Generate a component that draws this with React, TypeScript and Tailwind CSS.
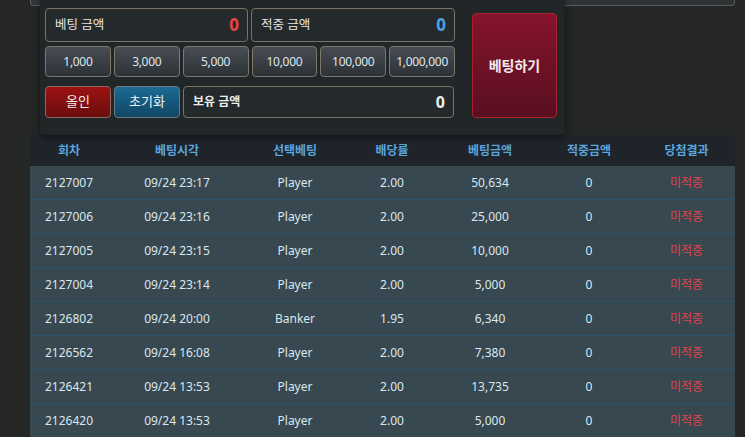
import React from "react";

type Row = {
  round: string;
  time: string;
  pick: string;
  odds: string;
  amount: string;
  win: string;
  result: string;
};

const rows: Row[] = [
  { round: "2127007", time: "09/24 23:17", pick: "Player", odds: "2.00", amount: "50,634", win: "0", result: "미적중" },
  { round: "2127006", time: "09/24 23:16", pick: "Player", odds: "2.00", amount: "25,000", win: "0", result: "미적중" },
  { round: "2127005", time: "09/24 23:15", pick: "Player", odds: "2.00", amount: "10,000", win: "0", result: "미적중" },
  { round: "2127004", time: "09/24 23:14", pick: "Player", odds: "2.00", amount: "5,000", win: "0", result: "미적중" },
  { round: "2126802", time: "09/24 20:00", pick: "Banker", odds: "1.95", amount: "6,340", win: "0", result: "미적중" },
  { round: "2126562", time: "09/24 16:08", pick: "Player", odds: "2.00", amount: "7,380", win: "0", result: "미적중" },
  { round: "2126421", time: "09/24 13:53", pick: "Player", odds: "2.00", amount: "13,735", win: "0", result: "미적중" },
  { round: "2126420", time: "09/24 13:53", pick: "Player", odds: "2.00", amount: "5,000", win: "0", result: "미적중" },
];

const chips = ["1,000", "3,000", "5,000", "10,000", "100,000", "1,000,000"];

const headers = ["회차", "베팅시각", "선택베팅", "배당률", "베팅금액", "적중금액", "당첨결과"];

const cols = "grid grid-cols-[78px_138px_98px_96px_100px_98px_97px]";

const BetPanel: React.FC = () => {
  return (
    <div className="relative z-10 -mt-[6px] ml-[10px] w-[525px] h-[135px] rounded-b-[5px] bg-[#212628] shadow-[0_2px_6px_rgba(0,0,0,0.5)] flex pl-[5px] pt-[8px]">
      <div className="w-[410px] flex flex-col">
        {/* Amount boxes */}
        <div className="flex gap-[3px]">
          <div className="w-[203px] h-[34px] rounded-[4px] border border-[#7a7367] bg-[#24292b] flex items-center justify-between pl-[9px] pr-[8px]">
            <span className="text-[12.5px] text-[#e4e6e6]">베팅 금액</span>
            <span className="text-[17px] font-bold text-[#e5443f]">0</span>
          </div>
          <div className="w-[204px] h-[34px] rounded-[4px] border border-[#7a7367] bg-[#24292b] flex items-center justify-between pl-[9px] pr-[8px]">
            <span className="text-[12.5px] text-[#e4e6e6]">적중 금액</span>
            <span className="text-[17px] font-bold text-[#4aa2e6]">0</span>
          </div>
        </div>

        {/* Chip buttons */}
        <div className="mt-[4px] grid grid-cols-6 gap-[3px] w-[410px]">
          {chips.map((c) => (
            <button
              key={c}
              className="h-[31px] rounded-[4px] border border-[#7d776b] bg-gradient-to-b from-[#474d53] to-[#2c3236] text-[12px] text-[#dfe6ec] tracking-[-0.3px]"
            >
              {c}
            </button>
          ))}
        </div>

        {/* All-in / reset / balance */}
        <div className="mt-[9px] flex gap-[3px]">
          <button className="w-[66px] h-[32px] rounded-[4px] border border-[#8a6a60] bg-gradient-to-b from-[#9c1212] to-[#6a0d0d] text-[13px] text-[#f2eeee]">
            올인
          </button>
          <button className="w-[66px] h-[32px] rounded-[4px] border border-[#6c7a80] bg-gradient-to-b from-[#1b6b92] to-[#114666] text-[13px] text-[#eef3f6]">
            초기화
          </button>
          <div className="w-[271px] h-[32px] rounded-[4px] border border-[#7a7367] bg-[#24292b] flex items-center justify-between pl-[9px] pr-[8px]">
            <span className="text-[12px] font-bold text-[#eceeee]">보유 금액</span>
            <span className="text-[16px] font-bold text-[#eceeee]">0</span>
          </div>
        </div>
      </div>

      <button className="ml-[17px] mt-[5px] w-[85px] h-[105px] rounded-[4px] border border-[#a8222c] bg-gradient-to-b from-[#85142c] to-[#5a0f21] text-[14px] font-bold text-[#f3eded]">
        베팅하기
      </button>
    </div>
  );
};

const HistoryTable: React.FC = () => {
  return (
    <div className="w-[705px] text-[12px]">
      <div className={`${cols} h-[31px] items-center bg-[#1e2429] text-[#5aa5de] font-bold`}>
        {headers.map((h) => (
          <div key={h} className="text-center">
            {h}
          </div>
        ))}
      </div>
      {rows.map((r) => (
        <div
          key={r.round + r.time}
          className={`${cols} h-[34px] items-center bg-[#374850] border-b border-[#2c5367] text-[#dbe7ef]`}
        >
          <div className="text-center">{r.round}</div>
          <div className="text-center">{r.time}</div>
          <div className="text-center">{r.pick}</div>
          <div className="text-center">{r.odds}</div>
          <div className="text-center">{r.amount}</div>
          <div className="text-center">{r.win}</div>
          <div className="text-center text-[#e0434a]">{r.result}</div>
        </div>
      ))}
    </div>
  );
};

export default function App() {
  return (
    <div className="w-[745px] h-[437px] overflow-hidden bg-[#252726] font-['Noto_Sans','Noto_Sans_CJK_KR',sans-serif]">
      <div className="pl-[30px]">
        {/* bottom edge of the panel above */}
        <div className="w-[705px] h-[6px] rounded-b-[4px] border border-t-0 border-[#5a5c5a] bg-[#2f3437]" />
        <BetPanel />
        <HistoryTable />
      </div>
    </div>
  );
}
